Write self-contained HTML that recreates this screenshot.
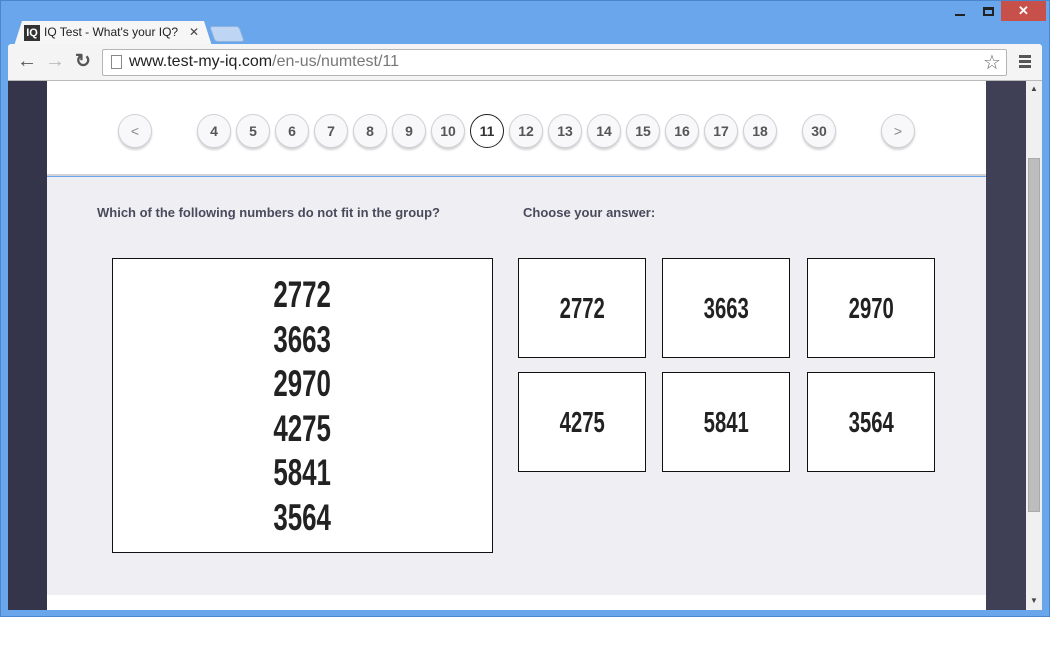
<!DOCTYPE html>
<html><head><style>
*{margin:0;padding:0;box-sizing:border-box}
body{width:1050px;height:672px;background:#fff;position:relative;overflow:hidden;font-family:"Liberation Sans",sans-serif}
.abs{position:absolute}
.win{left:0;top:0;width:1050px;height:617px;background:#6aa6ec;border:1px solid #4a86cc}
.tab{left:14px;top:21px;width:198px;height:25px;background:#f6f6f6;border-radius:5px 5px 0 0}
.toolbar{left:8px;top:44px;width:1034px;height:37px;background:#f4f4f4;border-bottom:1px solid #b9b9b9;border-radius:3px 3px 0 0}
.omni{left:102px;top:49px;width:905px;height:27px;background:#fff;border:1px solid #b5b5b5;border-radius:2px}
.num{font-weight:bold;color:#222;text-align:center}
.num span{display:inline-block;transform:scaleX(.7);letter-spacing:0}
.c{position:absolute;top:114px;width:34px;height:34px;border-radius:50%;background:#f8f8fa;border:1px solid #d0d0d6;box-shadow:0 2px 2px rgba(0,0,0,.18);font-weight:bold;font-size:14px;color:#555;text-align:center;line-height:32px}
.box{position:absolute;background:#fff;border:1px solid #111}
.sb{width:128px;height:100px;font-size:29px;line-height:100px}
</style></head><body>
<div class="abs win"></div>
<div class="abs tab" style="clip-path:polygon(8px 0,190px 0,198px 25px,0 25px,0 25px)"></div>
<div class="abs" style="left:24px;top:25px;width:16px;height:16px;background:#333;color:#fff;font-size:11px;font-weight:bold;line-height:16px;text-align:center">IQ</div>
<div class="abs" style="left:44px;top:25px;font-size:12px;color:#222">IQ Test - What's your IQ?</div>
<div class="abs" style="left:189px;top:25px;font-size:12px;color:#444">✕</div>
<div class="abs" style="left:212px;top:26px;width:30px;height:16px;background:#bed6f3;border:1px solid #8fb2dc;border-radius:3px;transform:skewX(20deg)"></div>
<div class="abs" style="width:10px;height:2px;background:#222;top:14px;left:955px"></div>
<div class="abs" style="left:983px;top:7px;width:11px;height:9px;border:2px solid #222;border-top-width:3px"></div>
<div class="abs" style="left:1001px;top:1px;width:45px;height:20px;background:#c7504a;color:#fff;text-align:center;font-size:13px;line-height:20px;font-weight:bold">✕</div>
<div class="abs toolbar"></div>
<div class="abs" style="left:17px;top:50px;font-size:20px;color:#555;font-weight:bold">←</div>
<div class="abs" style="left:45px;top:50px;font-size:20px;color:#bbb;font-weight:bold">→</div>
<div class="abs" style="left:75px;top:50px;font-size:19px;color:#555;font-weight:bold">↻</div>
<div class="abs omni"></div>
<div class="abs" style="left:111px;top:55px;width:11px;height:14px;border:1px solid #888;background:#fff"></div>
<div class="abs" style="left:129px;top:53px;font-size:16px;color:#222">www.test-my-iq.com<span style="color:#777">/en-us/numtest/11</span></div>
<div class="abs" style="left:983px;top:50px;font-size:20px;color:#666">☆</div>
<div class="abs" style="left:1019px;top:55px;width:12px;height:3px;background:#555;box-shadow:0 5px 0 #555,0 10px 0 #555"></div>
<div class="abs" style="left:8px;top:81px;width:39px;height:529px;background:#34344a"></div>
<div class="abs" style="left:986px;top:81px;width:40px;height:529px;background:#3f3f56"></div>
<div class="abs" style="left:1026px;top:81px;width:16px;height:529px;background:#f0f0f0"></div>
<div class="abs" style="left:1028px;top:158px;width:12px;height:354px;background:#bdbdbd;border:1px solid #aaa"></div>
<div class="abs" style="left:1030px;top:84px;font-size:8px;color:#444">▲</div>
<div class="abs" style="left:1030px;top:596px;font-size:8px;color:#444">▼</div>
<div class="abs" style="left:47px;top:81px;width:939px;height:95px;background:#fff;border-bottom:2px solid #d4d4d8"></div>
<div class="abs" style="left:47px;top:177px;width:939px;height:418px;background:#efeff3"></div>
<div class="abs" style="left:47px;top:595px;width:939px;height:15px;background:#fff"></div>
<div class="c" style="left:118px;font-weight:normal;color:#888">&lt;</div>
<div class="c" style="left:197px">4</div><div class="c" style="left:236px">5</div><div class="c" style="left:275px">6</div><div class="c" style="left:314px">7</div><div class="c" style="left:353px">8</div><div class="c" style="left:392px">9</div><div class="c" style="left:431px">10</div>
<div class="c" style="left:470px;background:#fff;border:1px solid #222;box-shadow:none;color:#333">11</div>
<div class="c" style="left:509px">12</div><div class="c" style="left:548px">13</div><div class="c" style="left:587px">14</div><div class="c" style="left:626px">15</div><div class="c" style="left:665px">16</div><div class="c" style="left:704px">17</div><div class="c" style="left:743px">18</div><div class="c" style="left:802px">30</div>
<div class="c" style="left:881px;font-weight:normal;color:#888">&gt;</div>
<div class="abs" style="left:97px;top:205px;font-size:13px;font-weight:bold;color:#4a4a5c">Which of the following numbers do not fit in the group?</div>
<div class="abs" style="left:523px;top:205px;font-size:13px;font-weight:bold;color:#4a4a5c">Choose your answer:</div>
<div class="box num" style="left:112px;top:258px;width:381px;height:295px;font-size:37px;line-height:44.6px;padding-top:14px"><span>2772</span><br><span>3663</span><br><span>2970</span><br><span>4275</span><br><span>5841</span><br><span>3564</span></div>
<div class="box num sb" style="left:518px;top:258px"><span>2772</span></div>
<div class="box num sb" style="left:662px;top:258px"><span>3663</span></div>
<div class="box num sb" style="left:807px;top:258px"><span>2970</span></div>
<div class="box num sb" style="left:518px;top:372px"><span>4275</span></div>
<div class="box num sb" style="left:662px;top:372px"><span>5841</span></div>
<div class="box num sb" style="left:807px;top:372px"><span>3564</span></div>
</body></html>
